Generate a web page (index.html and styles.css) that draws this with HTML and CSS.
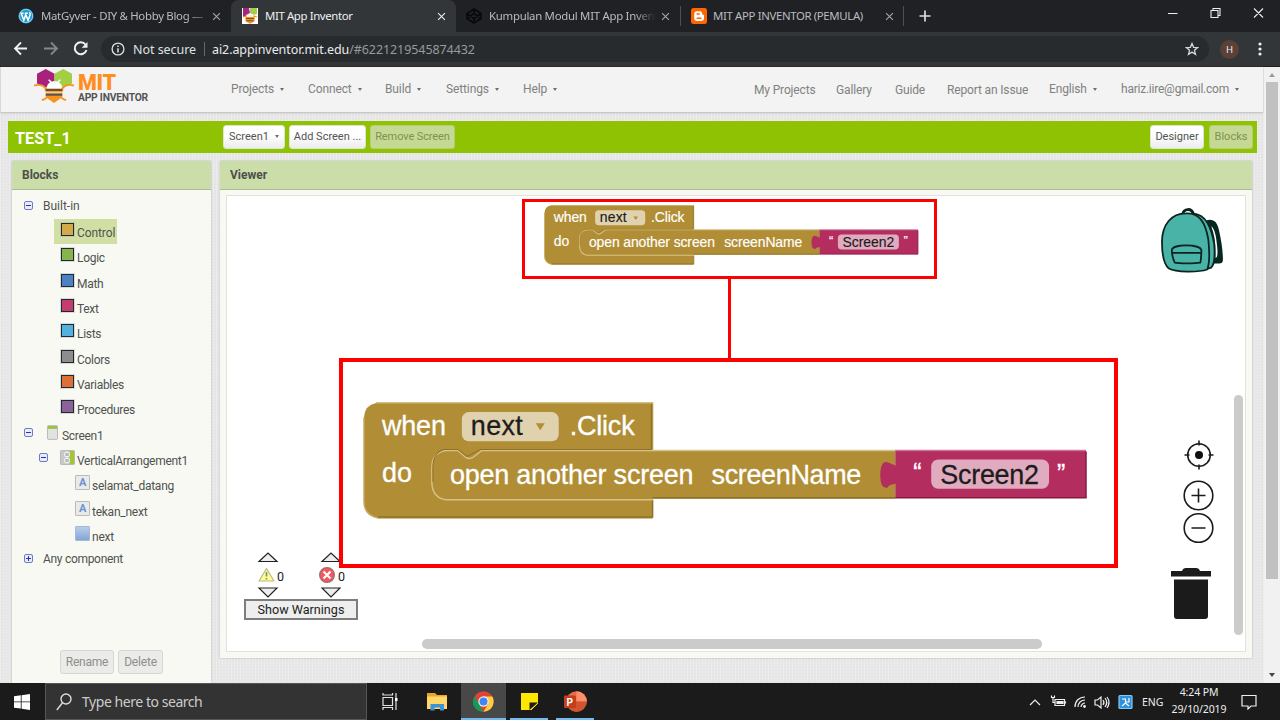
FILE: index.html
```html
<!DOCTYPE html>
<html lang="en">
<head>
<meta charset="utf-8">
<title>MIT App Inventor</title>
<link rel="stylesheet" href="styles.css">
</head>
<body>
<div class="tabstrip">
  <div class="tab tab-first">
    <svg class="favicon" viewBox="0 0 16 16"><circle cx="8" cy="8" r="7.600" fill="#1e9bd0"/><circle cx="8" cy="8" r="6.600" fill="none" stroke="#d9f0fa" stroke-width=".6"/><path d="M3.200 5.200l2.600 7 2-5.600-.6-1.400M7.200 5.200l2.900 7.200 2.100-5.800c.3-1-.5-1.600-.8-2.300M2.600 5.200h3M6.800 5.200h3" fill="none" stroke="#fff" stroke-width="1.500"/></svg>
    <span class="tab-title t1">MatGyver - DIY &amp; Hobby Blog —</span>
    <svg class="tab-x" viewBox="0 0 10 10"><path d="M1.200 1.200l7.600 7.600M8.800 1.200L1.200 8.800"/></svg>
  </div>
  <div class="tab tab-active">
    <svg class="favicon" viewBox="0 0 16 16"><rect width="16" height="16" fill="#fff"/><path d="M1 0h6l1 5-4 4H1z" fill="#a5267e"/><path d="M8 0h7v6l-4 1-3-2z" fill="#a4ce46"/><path d="M4 7l4-2 4 2v3H4z" fill="#f6f0ec"/><path d="M1 9l3-1v5l4 2 4-2V8l3 1" fill="none" stroke="#f7941e" stroke-width="1.200"/><path d="M4 9h8v4l-4 2.500L4 13z" fill="#f7941e"/><path d="M4 10.500h8M4.500 12.700h7" stroke="#6b5442"/></svg>
    <span class="tab-title t2">MIT App Inventor</span>
    <svg class="tab-x bright" viewBox="0 0 10 10"><path d="M1.200 1.200l7.600 7.600M8.800 1.200L1.200 8.800"/></svg>
  </div>
  <div class="tab tab-third">
    <svg class="favicon" viewBox="0 0 16 16" fill="none" stroke="#08090a" stroke-width="1.700" stroke-linejoin="round"><path d="M8 1l7 4.500v5L8 15l-7-4.500v-5zM8 1v4.500M8 10.500V15M1 5.500l7 5 7-5M1 10.500l7-5 7 5"/></svg>
    <span class="tab-title t3">Kumpulan Modul MIT App Invent</span>
    <svg class="tab-x" viewBox="0 0 10 10"><path d="M1.200 1.200l7.600 7.600M8.800 1.200L1.200 8.800"/></svg>
  </div>
  <div class="tab tab-fourth">
    <svg class="favicon" viewBox="0 0 16 16"><rect width="16" height="16" rx="2.500" fill="#f60"/><path d="M6 3.200h2.600c2 0 2.500 1.300 2.500 2.600 0 .7.400.9 1 .9.700 0 .9.400.9 1v2.500c0 1.700-1.100 2.800-2.800 2.800H6c-1.700 0-2.800-1.100-2.800-2.800V6c0-1.700 1.100-2.800 2.800-2.800z" fill="#fff"/><path d="M6.100 6h2.200M6.100 10.200h3.800" stroke="#f60" stroke-width="1.500" stroke-linecap="round"/></svg>
    <span class="tab-title t4">MIT APP INVENTOR (PEMULA)</span>
    <svg class="tab-x" viewBox="0 0 10 10"><path d="M1.200 1.200l7.600 7.600M8.800 1.200L1.200 8.800"/></svg>
  </div>
  <svg class="newtab" viewBox="0 0 12 12"><path d="M6 .5v11M.5 6h11" stroke="#dcdde0" stroke-width="1.700"/></svg>
  <svg class="winctl" viewBox="0 0 100 12" fill="none" stroke="#eee" stroke-width="1.100"><path d="M1 6.500h9.500M44 3.500h7v7h-7zM46 3.500v-2h7v7h-2M87 1.500l9 9M96 1.500l-9 9"/></svg>
</div>
<div class="toolbar">
  <svg class="navicons" viewBox="0 0 90 34" fill="none" stroke-width="1.800"><path d="M27 16.500H15.500M21 10.500l-6 6 6 6" stroke="#f1f1f1"/><path d="M44 16.500h12.500M51 10.500l6 6-6 6" stroke="#85888b"/><path d="M85.500 12.500a6 6 0 1 0 1 5.500" stroke="#f1f1f1" stroke-width="2"/><path d="M87.500 10v5.800h-5.800z" fill="#f1f1f1"/></svg>
  <div class="omnibox">
    <svg class="info" viewBox="0 0 14 14" fill="none" stroke="#dfe1e3" stroke-width="1.300"><circle cx="7" cy="7" r="5.900"/><path d="M7 6.200v4.200M7 3.500v1.500" stroke-width="1.500"/></svg>
    <span class="notsecure">Not secure</span><i class="omni-sep"></i>
    <span class="url"><b>ai2.appinventor.mit.edu</b>/#6221219545874432</span>
    <svg class="star" viewBox="0 0 14 14" fill="none" stroke="#d5d7d9" stroke-width="1.300"><path d="M7 1.500l1.600 3.800 4.100.3-3.200 2.700 1 4L7 10.100l-3.500 2.200 1-4L1.300 5.600l4.100-.3z"/></svg>
  </div>
  <span class="avatar">H</span>
  <svg class="dots" viewBox="0 0 4 14" fill="#eee"><circle cx="2" cy="2" r="1.600"/><circle cx="2" cy="7" r="1.600"/><circle cx="2" cy="12" r="1.600"/></svg>
</div>
<div class="page">
  <div class="content">
    <header class="site-head">
      <svg class="logo" viewBox="0 0 42 36"><path d="M3 5l9-5 9 5v10l-9 4-9-4z" fill="#a8217c"/><path d="M21 5l9-5 9 5v10l-9 4-9-4z" fill="#a2cf44"/><path d="M13 20c0-10 16-10 16 0z" fill="#fff"/><path d="M18 14l-3-3M24 14l3-3" stroke="#fff" stroke-width="1.500"/><path d="M0 17c8-2 10 1 12 3v3M41 17c-8-2-10 1-12 3v3M8 32c4-1 5-2 6-5M33 32c-4-1-5-2-6-5" fill="none" stroke="#f7941e" stroke-width="2"/><path d="M12 20h17v9l-8.500 6L12 29z" fill="#f7941e"/><path d="M12 21.500h17M12 26.500h17" stroke="#5b5552" stroke-width="2"/><path d="M12 24h17" stroke="#eedec8" stroke-width="1"/></svg>
      <div class="brand"><strong>MIT</strong><span>APP INVENTOR</span></div>
      <nav class="menu"><span>Projects<i></i></span><span>Connect<i></i></span><span>Build<i></i></span><span>Settings<i></i></span><span>Help<i></i></span></nav>
      <nav class="links"><span>My Projects</span><span>Gallery</span><span>Guide</span><span>Report an Issue</span><span class="up">English<i></i></span><span class="up mail">hariz.iire@gmail.com<i></i></span></nav>
    </header>
    <div class="project">
      <h1>TEST_1</h1>
      <div class="btn b-screen">Screen1<i></i></div><div class="btn b-add">Add Screen ...</div><div class="btn off b-remove">Remove Screen</div>
      <div class="btn b-designer">Designer</div><div class="btn off b-blocks">Blocks</div>
    </div>
    <div class="columns">
      <section class="panel blocks">
        <h2>Blocks</h2>
        <div class="tree">
          <div class="row root first"><i class="tog"></i><span>Built-in</span></div>
          <div class="row cat"><div class="sel"><i class="sw control"></i><span>Control</span></div></div>
          <div class="row cat"><i class="sw logic"></i><span>Logic</span></div>
          <div class="row cat"><i class="sw math"></i><span>Math</span></div>
          <div class="row cat"><i class="sw text"></i><span>Text</span></div>
          <div class="row cat"><i class="sw lists"></i><span>Lists</span></div>
          <div class="row cat"><i class="sw colors"></i><span>Colors</span></div>
          <div class="row cat"><i class="sw vars"></i><span>Variables</span></div>
          <div class="row cat"><i class="sw procs"></i><span>Procedures</span></div>
          <div class="row scr"><i class="tog"></i><svg class="ic-scr" viewBox="0 0 12 16"><rect x=".5" y=".5" width="11" height="15" rx="1" fill="#e2e2e2" stroke="#b4b4b4"/><path d="M1 1h10v3H1z" fill="#9dc13a"/></svg><span>Screen1</span></div>
          <div class="row va"><i class="tog"></i><svg class="ic" viewBox="0 0 16 16"><rect x=".5" y=".5" width="15" height="15" rx="1" fill="#c9c9c9" stroke="#b5b5b5"/><path d="M10 1h5v14h-5z" fill="#a3c635"/><rect x="5" y="2.500" width="5" height="4.500" rx="1" fill="#bbb" stroke="#fff"/><rect x="5" y="9" width="5" height="4.500" rx="1" fill="#bbb" stroke="#fff"/></svg><span>VerticalArrangement1</span></div>
          <div class="row leaf"><i class="ic-a">A</i><span>selamat_datang</span></div>
          <div class="row leaf"><i class="ic-a">A</i><span>tekan_next</span></div>
          <div class="row leaf"><i class="ic-btn"></i><span>next</span></div>
          <div class="row root any"><i class="tog plus"></i><span>Any component</span></div>
        </div>
        <div class="actions"><span class="act a1">Rename</span><span class="act a2">Delete</span></div>
      </section>
      <section class="panel viewer">
        <h2>Viewer</h2>
        <div class="workspace">
          <svg class="backpack" viewBox="0 0 64 66" stroke="#0b2420" stroke-width="1.800" stroke-linejoin="round"><path d="M46 14c7-2 10 1 12 9 2 9 4 20 4 30 0 2-1 3-3 3h-5l1-4c3-11-1-25-9-38z" fill="#022a21"/><path d="M51 19c4 10 5 21 4 32 2 1 3-3 2-12-1-9-2-17-6-20z" fill="#fff" stroke="none"/><path d="M22 7c1-6 9-7 11 0" fill="none" stroke-width="3"/><path d="M32 6c14 1 19 14 22 31 1 12 1 20-3 24l-7 2z" fill="#4ab3a7"/><path d="M8 62C2 57 1 46 1 35 1 17 11 6 25 6c14-1 20 9 23 26 1 9 2 23-1 31-9 3-32 3-39-1z" fill="#4ab3a7"/><path d="M11 43c1-6 28-6 30 0 0 4 0 8-1 13-6 1-21 1-26 0-2-4-3-8-3-13zM12 46h28" fill="none"/></svg>
          <svg class="controls" viewBox="0 0 42 168" fill="none" stroke="#1b1b1b" stroke-width="1.600"><circle cx="29" cy="15" r="11.300"/><path d="M29 .5v5M29 24.500v5M14.500 15h5M38.500 15h5"/><circle cx="29" cy="15" r="4" fill="#111" stroke="none"/><circle cx="28.500" cy="55.500" r="14.300"/><path d="M21.500 55.500h14M28.500 48.500v14M21.500 88h14"/><circle cx="28.500" cy="88" r="14.300"/><g fill="#1b1b1b" stroke="none"><path d="M1 131h11q1-3 4-3h10q3 0 4 3h11v5.500H1z"/><path d="M4 139.500h34V176q0 3-3 3H7q-3 0-3-3z"/></g></svg>
          <div class="vbar"></div><div class="hbar"></div>
          <div class="warnings">
            <div class="warn-cols">
              <svg viewBox="0 0 120 48" fill="#eee" stroke="#222" stroke-width="1.200"><path d="M15 10.500h18L24 2zM15 37h18l-9 9zM78 10.500h18L87 2zM78 37h18l-9 9z"/><path d="M22.500 17.500l7.500 12.500H15z" fill="#ffff8e" stroke="#b9b98a" stroke-linejoin="round"/><path d="M22.500 21v4.500M22.500 27v1.500" stroke="#888" stroke-width="1.700"/><circle cx="83" cy="24" r="7.400" fill="#f5555d" stroke="#9e7070"/><path d="M79.500 20.500l7 7M86.500 20.500l-7 7" stroke="#fff" stroke-width="2.200"/></svg>
              <span class="w0">0</span><span class="e0">0</span>
            </div>
            <div class="show">Show Warnings</div>
          </div>
          <div class="callout small">
            <svg class="block" viewBox="-1 -1 726 116" preserveAspectRatio="none"><path d="M12 0H289V47H532V95H289V114H14Q0 111 0 98V14Q1 2 12 0Z" fill="#b18e35"/><path d="M12 0H289V47M289 114H14Q0 111 0 98V14" fill="none" stroke="#c6a95d" stroke-width="1.500"/><path d="M288 1V46M532 94H289M289 96V113H14" fill="none" stroke="#8d7128" stroke-width="1.500"/><path d="M532 47H118L109 54Q106 56 102 54L94 47H82Q68 49 68 64V80Q69 94 82 96H289" fill="none" stroke="#d6c289" stroke-width="2"/><path d="M69 78V64Q69 49 80 46H94L103 53L117 46H288" fill="none" stroke="#8d7128" stroke-width="1"/><path d="M532 47H723V94H532V80Q525 81 524 84Q517 85 517 72Q517 56 525 59L532 62Z" fill="#b32d5e"/><path d="M532 47H723" stroke="#cc7294" stroke-width="1.500"/><path d="M723 48V94H532" fill="none" stroke="#8a1842" stroke-width="1.500"/><rect x="98" y="9" width="97" height="29" rx="7" fill="#e0d2ae"/><path d="M172 21h9l-4.500 7z" fill="#b18e35"/><rect x="568" y="56" width="118" height="29" rx="7" fill="#e0abbf"/><g class="bt"><text x="18" y="32" textLength="64">when</text><text x="206" y="32" textLength="65">.Click</text><text x="18" y="78" textLength="30">do</text><text x="86" y="80" textLength="244">open another screen</text><text x="348" y="80" textLength="151">screenName</text><text class="q" x="551" y="77">“</text><text class="q" x="695" y="77">”</text><g class="dark"><text x="107" y="32" textLength="52">next</text><text x="577" y="80" textLength="100">Screen2</text></g></g></svg>
          </div>
          <div class="connector"></div>
          <div class="callout large">
            <svg class="block" viewBox="-1 -1 726 116" preserveAspectRatio="none"><path d="M12 0H289V47H532V95H289V114H14Q0 111 0 98V14Q1 2 12 0Z" fill="#b18e35"/><path d="M12 0H289V47M289 114H14Q0 111 0 98V14" fill="none" stroke="#c6a95d" stroke-width="1.500"/><path d="M288 1V46M532 94H289M289 96V113H14" fill="none" stroke="#8d7128" stroke-width="1.500"/><path d="M532 47H118L109 54Q106 56 102 54L94 47H82Q68 49 68 64V80Q69 94 82 96H289" fill="none" stroke="#d6c289" stroke-width="1.500"/><path d="M69 78V64Q69 49 80 46H94L103 53L117 46H288" fill="none" stroke="#8d7128" stroke-width="1"/><path d="M532 47H723V94H532V80Q525 81 524 84Q517 85 517 72Q517 56 525 59L532 62Z" fill="#b32d5e"/><path d="M532 47H723" stroke="#cc7294" stroke-width="1.500"/><path d="M723 48V94H532" fill="none" stroke="#8a1842" stroke-width="1.500"/><rect x="98" y="9" width="97" height="29" rx="7" fill="#e0d2ae"/><path d="M172 20h9l-4.500 7z" fill="#b18e35"/><rect x="568" y="56" width="118" height="29" rx="7" fill="#e0abbf"/><g class="bt"><text x="18" y="32" textLength="64">when</text><text x="206" y="32" textLength="65">.Click</text><text x="18" y="78" textLength="30">do</text><text x="86" y="80" textLength="244">open another screen</text><text x="348" y="80" textLength="150">screenName</text><text class="q" x="550" y="77">“</text><text class="q" x="694" y="78">”</text><g class="dark"><text x="107" y="32" textLength="52">next</text><text x="577" y="80" textLength="99">Screen2</text></g></g></svg>
          </div>
        </div>
      </section>
    </div>
  </div>
  <div class="scrollbar"><i class="arr"></i><div class="thumb"></div><i class="arr down"></i></div>
</div>
<footer class="taskbar">
  <svg class="win" viewBox="0 0 16 16" fill="#fff"><path d="M0 2.300l6.800-1v6.200H0zM7.600 1.200L16 0v7.500H7.600zM0 8.300h6.800v6.300L0 13.700zM7.600 8.300H16V16l-8.400-1.300z"/></svg>
  <div class="search"><svg viewBox="0 0 16 18" fill="none" stroke="#ddd" stroke-width="1.400"><circle cx="10" cy="6" r="5"/><path d="M6.500 9.800L.8 17"/></svg><span>Type here to search</span></div>
  <svg class="apps" viewBox="0 0 220 37">
    <g fill="none" stroke="#e2e2e2" stroke-width="1.200"><path d="M16 14.500h9.500v8H16zM16 10v2h9.500v-2M16 27v-2.500h9.500V27M29 10v17"/></g><path d="M28 15h2.500v3H28z" fill="#fff"/>
    <path d="M60 10h8l2 2h10v14H60z" fill="#e9a823"/><path d="M60 13.500h20V26H60z" fill="#ffd868"/><path d="M63.500 27.500v-6.500h13.500v6.500H73v-3h-5.500v3z" fill="#3c93d6"/>
    <path d="M94 0h45v37H94z" fill="#484848"/><circle cx="116.500" cy="18.500" r="10.200" fill="#db4437"/><path d="M107.700 13.400l5.600 10.200 3 4.900c-9 0-13-8.600-8.600-15.100z" fill="#0f9d58"/><path d="M116.500 13.500h8.900c3.500 7-1 15.200-8.900 15.200l4.600-7.700z" fill="#ffcd40"/><circle cx="116.500" cy="18.500" r="5.200" fill="#f1f1f1"/><circle cx="116.500" cy="18.500" r="4" fill="#4285f4"/>
    <path d="M154 10h17v17h-17z" fill="#ffe600"/><path d="M162.500 27v-7.500h8.500z" fill="#1c1c1c"/><path d="M171 20.500V27h-7z" fill="#1b1b1c"/><path d="M164 27l7-7" stroke="#ffe600"/>
    <circle cx="209.500" cy="18.500" r="10.300" fill="#ed6c47"/><path d="M209.500 8.200a10.300 10.300 0 0 1 10.300 10.300h-10.300z" fill="#ff8f6b"/><path d="M199.200 18.500h20.600a10.300 10.300 0 0 1-20.600 0z" fill="#d35230"/><rect x="197" y="12.500" width="12" height="12.500" rx="1" fill="#c43e1c"/>
    <text x="199.500" y="22.500" font-size="10" font-weight="bold" fill="#fff">P</text>
    <path d="M94 35h45v2H94zM143 35h38v2h-38zM189 35h31v2h-31z" fill="#76b9ed"/>
  </svg><div class="accent"></div>
  <svg class="tray" viewBox="0 0 110 20" fill="none" stroke="#eee" stroke-width="1.200"><path d="M1 13l5-5 5 5"/><path d="M26 7.500h9.500v6H26zM22 5.500h4M22.500 3.500v2M25.500 3.500v2M24 6v4.500h2"/><path d="M28 9.500h6v2h-6z" fill="#eee"/><path d="M36.500 9.500v2"/><path d="M46 15c0-6 4-10 10-10M49 15c0-4 3-7 7-7M52 15c0-2 2-4 4-4"/><circle cx="55.500" cy="14.500" r=".8" fill="#eee"/><path d="M66 8h2.500l3.500-3v11l-3.500-3H66zM74 8q2 2.500 0 5M76 6q3.500 4.500 0 9M78 5q4 5.500 0 11"/><rect x="90" y="3.500" width="13" height="13" rx="1" fill="#2d91dd" stroke="#8bc8f2"/><path d="M93 7h3.500v3h3.500V6M93 14l3.500-3 3.500 3" stroke="#fff"/></svg>
  <span class="eng">ENG</span>
  <div class="clock"><span class="time">4:24 PM</span><span class="date">29/10/2019</span></div>
  <svg class="notif" viewBox="0 0 16 16" fill="none" stroke="#eee" stroke-width="1.200"><path d="M1 1.500h14v10.500h-5l-3 3v-3H1z"/></svg>
</footer>
</body>
</html>
```

FILE: styles.css
```css
* { box-sizing: border-box; }
body { margin: 0; width: 1280px; height: 720px; overflow: hidden; display: flex; flex-direction: column; font-family: Roboto, "Liberation Sans", sans-serif; font-size: 12px; color: #4f5350; white-space: nowrap; }
svg { display: block; flex: none; }
i { font-style: normal; }

/* browser tabs */
.tabstrip { height: 32px; flex: none; background: #202124; display: flex; font-family: "Noto Sans", "Open Sans", sans-serif; font-size: 11.4px; color: #b9bcc0; }
.tab { display: flex; align-items: center; height: 32px; flex: none; }
.tab-first { width: 231px; padding-left: 18px; }
.tab-active { width: 225px; padding-left: 11px; background: #323639; border-radius: 8px 8px 0 0; color: #f1f1f1; }
.tab-third { width: 224px; padding-left: 10px; }
.tab-fourth { width: 224px; padding-left: 10px; border: solid #4d5054; border-width: 0 1px; border-image: linear-gradient(transparent 7px, #4d5054 7px, #4d5054 25px, transparent 25px) 1; }
.favicon { width: 16px; height: 16px; margin-right: 7px; }
.tab-title { flex: none; margin-top: -1px; }
.t1 { width: 171px; letter-spacing: -.3px; -webkit-mask-image: linear-gradient(90deg, #000 145px, transparent 172px); }
.t2 { width: 172px; letter-spacing: -.38px; }
.t3 { width: 172px; letter-spacing: -.28px; -webkit-mask-image: linear-gradient(90deg, #000 145px, transparent 167px); }
.t4 { width: 171px; margin-left: -1px; margin-right: 1px; letter-spacing: -.36px; }
.tab-x { width: 9px; height: 9px; fill: none; stroke: #a0a3a7; stroke-width: 1.300; }
.bright { stroke: #e8e8e8; }
.newtab { width: 12px; height: 12px; margin: 10px 0 0 15px; }
.winctl { width: 100px; height: 12px; margin: 7px 13px 0 auto; }

.toolbar { height: 35px; flex: none; background: #323639; border-bottom: 1px solid #1e1f21; display: flex; align-items: center; font-family: "Noto Sans", "Open Sans", sans-serif; }
.navicons { width: 90px; height: 34px; }
.omnibox { margin-left: 11px; width: 1108px; height: 26px; border-radius: 13px; background: #282b2e; display: flex; align-items: center; padding: 0 10px; font-size: 12.5px; color: #dfe1e3; }
.info { width: 14px; height: 14px; margin-right: 8px; }
.notsecure { width: 63px; letter-spacing: -.05px; }
.omni-sep { width: 1px; height: 14px; background: #66696c; margin: 0 7px 0 8px; }
.url { color: #969a9e; flex: 1; letter-spacing: -.08px; }
.url b { font-weight: 400; color: #e8eaed; }
.star { width: 14px; height: 14px; }
.avatar { width: 19px; height: 19px; border-radius: 50%; background: #5b4037; color: #eee; font-size: 9.500px; line-height: 19px; text-align: center; margin-left: 11px; }
.dots { width: 4px; height: 14px; margin-left: 19px; }

/* page */
.page { flex: 1; min-height: 0; display: flex; }
.content { width: 1264px; display: flex; flex-direction: column; background-color: #e7e7e7; background-image: repeating-linear-gradient(90deg, rgba(255,255,255,.25) 0 1px, transparent 1px 3px), repeating-linear-gradient(0deg, rgba(0,0,0,.015) 0 1px, transparent 1px 3px); }
.site-head { height: 45px; flex: none; width: 1263px; background: #f3f3f3; box-shadow: 0 1px 2px #bbb; display: flex; border-left: 1px solid #d8d8d8; color: #7f8280; font-size: 12px; }
.logo { width: 41px; height: 35px; margin: 2px 0 0 33px; }
.brand { display: flex; flex-direction: column; margin-left: 3px; width: 153px; color: #545454; }
.brand strong { color: #ff8e20; font-size: 21.5px; font-weight: 900; line-height: 22px; margin-top: 5px; letter-spacing: -.3px; }
.brand span { font-size: 10.300px; font-weight: 700; line-height: 10px; letter-spacing: -.22px; margin-top: -1px; }
.menu { display: grid; grid-template-columns: 77px 77px 61px 77px 231px; line-height: 14px; padding-top: 15px; letter-spacing: -.12px; }
.menu i, .links i, .b-screen i { display: inline-block; border: 2.500px solid transparent; border-top: 3px solid #6d706e; border-bottom: 0; margin-left: 6px; vertical-align: 2px; }
.links { display: grid; grid-template-columns: 82px 59px 52px 102px 72px 140px; line-height: 14px; padding-top: 16px; letter-spacing: -.15px; }
.up { margin-top: -1px; }
.mail { letter-spacing: -.23px; }
.project { margin: 9px 0 0 8px; width: 1249px; height: 32px; flex: none; background: #8fc202; display: flex; align-items: center; padding-left: 7px; }
h1 { margin: 3px 0 0; width: 208px; color: #fff; font-size: 16.300px; font-weight: 700; line-height: 20px; }
.btn { height: 24px; border-radius: 3px; margin-right: 4px; background: linear-gradient(#fff 40%, #ececec); border: 1px solid #dfe3d2; color: #525552; font-size: 11px; line-height: 21px; text-align: center; margin-top: -1px; flex: none; }
.off { background: #c6d994; border-color: #b5cc78; color: #7e9251; }
.b-screen { width: 62px; } .b-add { width: 77px; } .b-remove { width: 85px; letter-spacing: -.1px; }
.b-designer { width: 54px; margin-left: auto; } .b-blocks { width: 44px; margin-left: 1px; }
.columns { display: flex; gap: 9px; margin: 8px 0 0 12px; flex: 1; min-height: 0; align-items: flex-start; }
.panel { background: #f8f9f3; box-shadow: 0 0 2px #b5b5b5; }
.blocks { width: 199px; height: 522px; display: flex; flex-direction: column; }
.viewer { width: 1032px; height: 497px; }
h2 { margin: 0; height: 29px; flex: none; background: #cbdda9; border-bottom: 1px solid #adb895; padding-left: 10px; font-size: 12px; line-height: 29px; font-weight: 700; color: #4c504b; }
.tree { flex: 1; padding-top: 2px; letter-spacing: -.3px; }
.row { height: 25.330px; display: flex; align-items: center; }
.row span { margin-top: 3px; line-height: 20px; }
.first { height: 27px; letter-spacing: 0; }
.first span { margin-top: 1px; }
.root { padding-left: 12px; }
.root .tog { margin-right: 10px; }
.tog { width: 9px; height: 9px; border: 1px solid #6f7cc2; border-radius: 2px; background: linear-gradient(#2a32b8, #2a32b8) center/5px 1px no-repeat, #e9ecff; }
.plus { background: linear-gradient(#2a32b8, #2a32b8) center/5px 1px no-repeat, linear-gradient(#2a32b8, #2a32b8) center/1px 5px no-repeat, #e9ecff; }
.cat { padding-left: 49px; }
.cat > span { margin-left: 2px; }
.sel { height: 25px; margin-left: -7px; padding-left: 7px; width: 63px; background: #d2dfa4; display: flex; align-items: center; margin-top: 0; letter-spacing: -.1px; }
.sel span { margin-left: 2px; }
.sw { width: 13px; height: 13px; border: 1.500px solid #23282d; margin: 0 1px 4px 0; outline: 1px solid rgba(150,165,190,.35); }
.control { background: #d2aa49; } .logic { background: #87b54c; } .math { background: #4c82c3; } .text { background: #c43d6c; } .lists { background: #53b2dc; } .colors { background: #8d8d8d; } .vars { background: #dd7135; } .procs { background: #8c6298; }
.scr { padding-left: 12px; } .scr .tog { margin: 0 14px 4px 0; }
.ic-scr { width: 11px; height: 15px; margin: 0 4px 4px 0; }
.va { padding-left: 27px; } .va .tog { margin: 0 12px 4px 0; }
.ic { width: 15px; height: 15px; margin: 0 2px 4px 0; }
.leaf { padding-left: 63px; letter-spacing: -.25px; }
.ic-a, .ic-btn { width: 15px; height: 15px; margin: 0 2px 4px 0; border: 1px solid #bbb; background: #eaeaea; color: #6c95cf; font: bold 11px/13px Roboto, sans-serif; text-align: center; border-radius: 1px; }
.ic-btn { background: linear-gradient(#b9cdea, #82a6d8); border-color: #a7b8d3; }
.any { height: 20px; } .any span { margin-top: 1px; }
.actions { display: flex; gap: 4px; padding-left: 48px; margin-bottom: 9px; }
.act { height: 24px; border: 1px solid #d6d6d3; border-radius: 3px; background: #ebebe9; color: #8d8f8b; line-height: 22px; text-align: center; letter-spacing: -.2px; }
.a1 { width: 54px; } .a2 { width: 45px; }

/* workspace canvas */
.workspace { position: relative; margin: 5px 0 0 6px; width: 1020px; height: 457px; background: #fff; border: 1px solid #e2e3df; }
.workspace > * { position: absolute; }
.backpack { left: 934px; top: 11px; width: 63px; height: 66px; }
.controls { left: 943px; top: 244px; width: 42px; height: 168px; overflow: visible; }
.vbar { left: 1007px; top: 199px; width: 9px; height: 240px; border-radius: 5px; background: #cbcbcb; }
.hbar { left: 195px; top: 443px; width: 620px; height: 10px; border-radius: 5px; background: #cbcbcb; }
.warnings { left: 17px; top: 355px; width: 120px; color: #222; }
.warn-cols { position: relative; height: 48px; }
.warn-cols svg { width: 120px; height: 48px; }
.w0, .e0 { position: absolute; top: 18px; font-size: 12.500px; line-height: 15px; }
.w0 { left: 33px; } .e0 { left: 94px; }
.show { width: 114px; height: 21px; border: 2px solid #7d7d7d; background: #eee; line-height: 17px; text-align: center; font-size: 12.6px; }
.callout { border: 3px solid #f00; background: #fff; }
.small { left: 295px; top: 3px; width: 415px; height: 80px; padding: 3px 0 0 19px; }
.small .block { width: 375px; height: 60px; }
.large { left: 112px; top: 162px; width: 779px; height: 210px; border-width: 4px; padding: 40px 0 0 20px; }
.large .block { width: 725px; height: 117px; }
.connector { left: 501px; top: 82px; width: 3px; height: 82px; background: #f00; }
.bt { font-family: "Liberation Sans", Arial, sans-serif; font-size: 27px; fill: #fff; stroke: #fff; stroke-width: .3px; }
.q { font-size: 25px; }
.dark { fill: #1c1c1c; stroke: #1c1c1c; }

.scrollbar { width: 16px; background: #f1f1f1; display: flex; flex-direction: column; align-items: center; }
.arr { border: 3px solid transparent; border-bottom: 4px solid #9a9a9a; border-top: 0; margin: 6px 0 5px; }
.down { transform: rotate(180deg); border-bottom-color: #444; margin: auto 0 6px; }
.thumb { width: 12px; height: 497px; background: #c1c1c1; }

.taskbar { height: 37px; flex: none; background: #1b1b1c; display: flex; align-items: center; color: #eee; font-family: "Noto Sans", "Open Sans", sans-serif; }
.win { width: 16px; height: 16px; margin: 0 14px; }
.search { width: 322px; height: 37px; margin-left: 1px; background: #333; border: 1px solid #565656; display: flex; align-items: center; padding-left: 10px; color: #ccc; font-size: 14px; }
.search svg { width: 16px; height: 18px; margin-right: 10px; }
.search span { letter-spacing: -.450px; }
.apps { width: 220px; height: 37px; font-family: Roboto, sans-serif; }
.accent { width: 7px; height: 2px; background: #76b9ed; align-self: flex-end; }
.tray { width: 110px; height: 20px; margin-left: 435px; }
.eng { width: 27px; margin-left: 3px; font-size: 10.500px; }
.clock { width: 60px; display: flex; flex-direction: column; align-items: center; font-size: 10.500px; line-height: 17px; letter-spacing: -.1px; margin-top: -1px; }
.notif { width: 16px; height: 16px; margin-left: 12px; }
```
